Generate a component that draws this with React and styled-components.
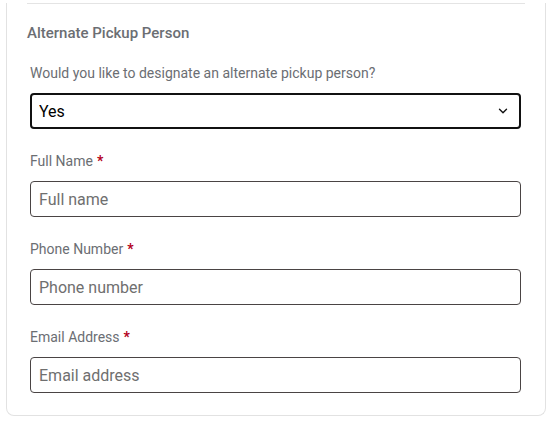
import React, { useState } from "react"
import styled, { createGlobalStyle } from "styled-components"
import { ChevronDown } from "lucide-react"

const GlobalStyle = createGlobalStyle`
  html, body {
    margin: 0;
    padding: 0;
    background: #ffffff;
    font-family: Roboto, "Liberation Sans", Arial, sans-serif;
  }
  * {
    box-sizing: border-box;
  }
`

const Card = styled.div`
  margin-left: 6px;
  width: 540px;
  padding: 0 20px 22px 20px;
  border: 1px solid #e2e2e2;
  border-top: none;
  border-radius: 0 0 8px 8px;
  background: #fff;
`

const Divider = styled.div`
  height: 1px;
  margin-top: 3px;
  background: #e4e4e4;
`

const Heading = styled.h3`
  margin: 19px 0 0 0;
  font-size: 15px;
  line-height: 20px;
  font-weight: 500;
  color: #6b6e73;
`

const Fields = styled.div`
  padding: 0 4px 0 3px;
`

const Question = styled.label`
  display: block;
  margin-top: 20px;
  margin-bottom: 10px;
  font-size: 14px;
  line-height: 20px;
  color: #6b6e73;
`

const SelectWrap = styled.div`
  position: relative;
`

const Select = styled.select`
  appearance: none;
  display: block;
  width: 100%;
  height: 36px;
  padding: 0 30px 0 7px;
  border: 2px solid #111;
  border-radius: 4px;
  background: #fff;
  font-family: inherit;
  font-size: 16px;
  color: #000;
  outline: none;
`

const Chevron = styled(ChevronDown)`
  position: absolute;
  right: 11px;
  top: 11px;
  pointer-events: none;
  color: #111;
`

const Group = styled.div`
  margin-top: 22px;
`

const Label = styled.label`
  display: block;
  margin-bottom: 10px;
  font-size: 14px;
  line-height: 20px;
  color: #6b6e73;
`

const Required = styled.span`
  margin-left: 4px;
  color: #b3001b;
  font-weight: 700;
`

const Input = styled.input`
  display: block;
  width: 100%;
  height: 36px;
  padding: 0 8px;
  border: 1px solid #4a4444;
  border-radius: 4px;
  font-family: inherit;
  font-size: 16px;
  color: #222;
  outline: none;

  &::placeholder {
    color: #6f6f6f;
  }
`

const fields = [
  { id: "fullName", label: "Full Name", placeholder: "Full name", type: "text" },
  { id: "phone", label: "Phone Number", placeholder: "Phone number", type: "tel" },
  { id: "email", label: "Email Address", placeholder: "Email address", type: "email" },
]

export default function App() {
  const [choice, setChoice] = useState("yes")
  const [values, setValues] = useState({ fullName: "", phone: "", email: "" })

  return (
    <>
      <GlobalStyle />
      <Card>
        <Divider />
        <Heading>Alternate Pickup Person</Heading>
        <Fields>
          <Question htmlFor="alternate">Would you like to designate an alternate pickup person?</Question>
          <SelectWrap>
            <Select id="alternate" value={choice} onChange={(e) => setChoice(e.target.value)}>
              <option value="yes">Yes</option>
              <option value="no">No</option>
            </Select>
            <Chevron size={14} strokeWidth={2.4} />
          </SelectWrap>
          {choice === "yes" && fields.map((f) => (
            <Group key={f.id}>
              <Label htmlFor={f.id}>
                {f.label}<Required>*</Required>
              </Label>
              <Input
                id={f.id}
                type={f.type}
                placeholder={f.placeholder}
                value={values[f.id]}
                onChange={(e) => setValues({ ...values, [f.id]: e.target.value })}
              />
            </Group>
          ))}
        </Fields>
      </Card>
    </>
  )
}
